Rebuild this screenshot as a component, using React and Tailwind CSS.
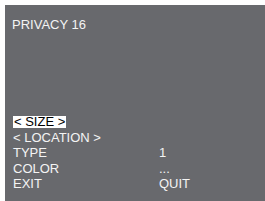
import React from 'react';

const rows = [
  { label: '< SIZE >', value: '', active: true },
  { label: '< LOCATION >', value: '' },
  { label: 'TYPE', value: '1' },
  { label: 'COLOR', value: '...' },
  { label: 'EXIT', value: 'QUIT' },
];

const App = () => {
  return (
    <div className="w-[265px] h-[201px] bg-white pt-[5px] pl-[5px] overflow-hidden">
      <div
        className="w-[260px] h-[196px] bg-[#68696d] text-[#f4f4f4] text-[13px] leading-[15.5px] pl-[8px] pt-[12px] flex flex-col justify-between pb-[9.5px]"
        style={{ fontFamily: '"Liberation Sans", Arial, sans-serif' }}
      >
        <div className="-ml-px">PRIVACY 16</div>
        <div className="grid grid-cols-[146px_1fr]">
          {rows.map((r, i) => (
            <React.Fragment key={i}>
              <div>
                {r.active ? (
                  <span className="inline-block bg-white text-black leading-[12px] px-px">{r.label}</span>
                ) : (
                  r.label
                )}
              </div>
              <div>{r.value}</div>
            </React.Fragment>
          ))}
        </div>
      </div>
    </div>
  );
};

export default App;
